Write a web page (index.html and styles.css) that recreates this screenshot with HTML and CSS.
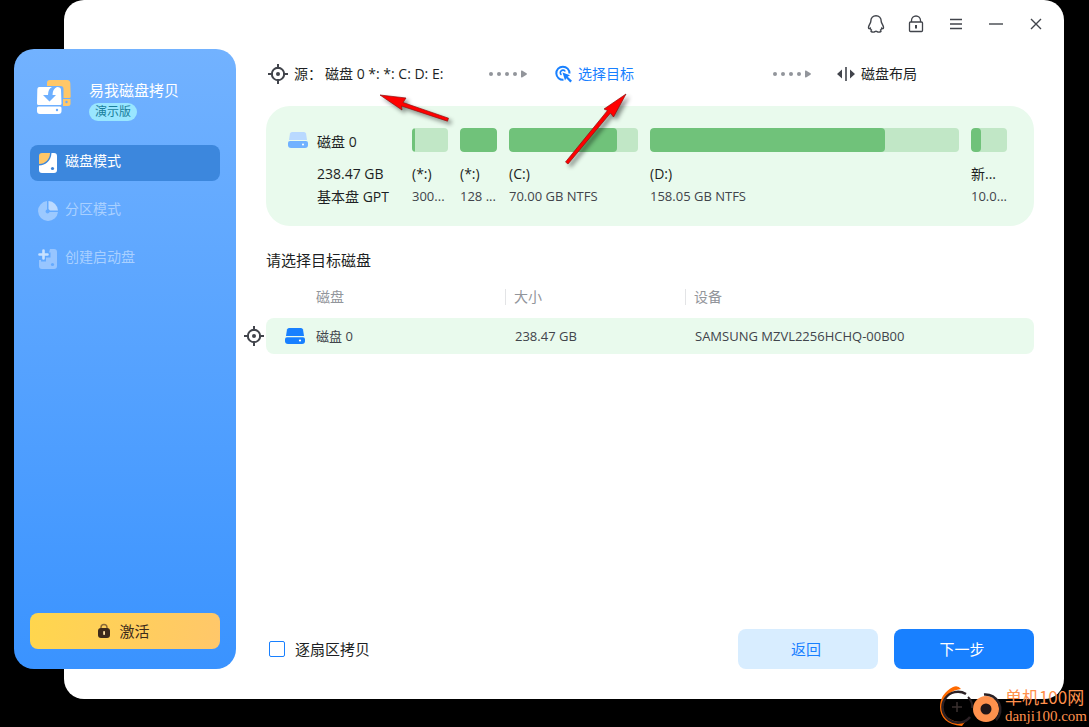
FILE: index.html
```
<!DOCTYPE html>
<html lang="zh-CN">
<head>
<meta charset="utf-8">
<title>易我磁盘拷贝</title>
<link rel="stylesheet" href="styles.css">
</head>
<body>
<svg class="defs" width="0" height="0" aria-hidden="true">
  <symbol id="crosshair" viewBox="0 0 20 20">
    <g fill="none" stroke="#41444b" stroke-width="2">
      <circle cx="10" cy="10" r="6.2"/>
      <path d="M10 0v5M10 15v5M0 10h5M15 10h5"/>
    </g>
    <circle cx="10" cy="10" r="2" fill="#41444b"/>
  </symbol>
  <symbol id="dots" viewBox="0 0 38 8">
    <g fill="#92959b">
      <circle cx="2" cy="4" r="2"/><circle cx="10" cy="4" r="2"/><circle cx="18" cy="4" r="2"/><circle cx="26" cy="4" r="2"/>
      <path d="M32 1.2q0-1 1-.6l4.5 2.7q.8.7 0 1.4L33 7.4q-1 .4-1-.6z"/>
    </g>
  </symbol>
</svg>

<div class="window">
  <aside class="sidebar">
    <div class="brand">
      <svg class="brand-icon" width="36" height="36" viewBox="0 0 36 36" aria-hidden="true">
        <path d="M11 5V4q0-3 3-3h17q3 0 3.300 3l.4 13.500q0 1.500-1.500 1.500H27.500V10q0-3-3-3H11z" fill="#ffc768"/>
        <path d="M27 20h7.500v4.500q0 2.500-2.500 2.500h-5z" fill="#ffc768"/>
        <circle cx="30.500" cy="23" r="1.200" fill="#68abff"/>
        <path d="M3.300 8H16q-4 2-4 8H7l6.500 6.500L20 16h-3.500q0-6 4.500-8 4 0 4 3l.5 13.500q0 1.500-1.500 1.500H2.500Q1 26 1 24.500L1.300 11q0-3 2-3z" fill="#fff"/>
        <path d="M1 29q0-1.500 1.500-1.500h21.500q1.500 0 1.500 1.500v3q0 3-3 3H4q-3 0-3-3z" fill="#fff"/>
        <circle cx="21" cy="31" r="1.200" fill="#68abff"/>
      </svg>
      <div class="brand-text">
        <span class="brand-name">易我磁盘拷贝</span>
        <span class="edition">演示版</span>
      </div>
    </div>
    <nav class="nav">
      <button class="nav-item active" type="button">
        <svg width="20" height="20" viewBox="0 0 20 20" aria-hidden="true">
          <path d="M13.500 0H16q3 0 3 3v14q0 3-3 3H4q-3 0-3-3v-4.500C8 12 13 8 13.500 0z" fill="#fff"/>
          <path d="M1 11V3q0-3 3-3h8C12 6 7.500 11 1 11z" fill="#ffc768"/>
          <circle cx="14.500" cy="15.500" r="1.600" fill="#3c84d9"/>
        </svg>
        <span>磁盘模式</span>
      </button>
      <button class="nav-item" type="button" disabled>
        <svg width="20" height="20" viewBox="0 0 20 20" aria-hidden="true">
          <path d="M9 0a10 10 0 1 0 11 11h-8.500a2 2 0 1 1-2.500-2.500z" fill="#9cc9ff"/>
          <path d="M10.500 0A10 10 0 0 1 20 9.500H12L10.500 8z" fill="#bcdaff"/>
        </svg>
        <span>分区模式</span>
      </button>
      <button class="nav-item" type="button" disabled>
        <svg width="20" height="20" viewBox="0 0 20 20" aria-hidden="true">
          <path d="M12 0h4q3 0 3 3v14q0 3-3 3H4q-3 0-3-3v-6h2v1.500h5V8.500h4.500v-5H11z" fill="#97c5ff"/>
          <path d="M5.500 1.500v8M1.500 5.500h8" stroke="#c8e1ff" stroke-width="2.600" stroke-linecap="round"/>
          <circle cx="14.500" cy="15.500" r="1.600" fill="#64aaff"/>
        </svg>
        <span>创建启动盘</span>
      </button>
    </nav>
    <button class="activate" type="button">
      <svg width="14" height="16" viewBox="0 0 14 16" aria-hidden="true">
        <path d="M4 6V4.500a3 3 0 0 1 6 0V6" fill="none" stroke="#8a6a38" stroke-width="1.400"/>
        <rect x="1" y="5" width="12" height="10" rx="3" fill="#3d2a1b"/>
        <rect x="6.200" y="8" width="1.800" height="4" rx=".8" fill="#ffe3a8"/>
      </svg>
      <span>激活</span>
    </button>
  </aside>

  <main class="content">
    <div class="titlebar">
      <button type="button" aria-label="QQ">
        <svg width="20" height="20" viewBox="0 0 20 20"><path d="M10 1.800c-3 0-5.200 2.200-5.200 5.400 0 2-2.300 4-2.300 6.300 0 1.200.8 1.600 1.700.6.300.9.700 1.500 1.200 2-1.200 1.400.3 2 2 2 1.200 0 1.800-.8 2.600-.8s1.400.8 2.600.8c1.700 0 3.200-.6 2-2 .5-.5.9-1.100 1.200-2 .9 1 1.700.6 1.700-.6 0-2.300-2.300-4.300-2.300-6.300 0-3.200-2.200-5.400-5.200-5.400z" fill="none" stroke="#41444b" stroke-width="1.400"/></svg>
      </button>
      <button type="button" aria-label="锁">
        <svg width="20" height="20" viewBox="0 0 20 20"><g fill="none" stroke="#41444b" stroke-width="1.300"><rect x="3.500" y="8" width="13" height="9.500" rx="1"/><path d="M5.500 8V6.500a4.500 4.500 0 0 1 9 0V8"/></g><path d="M10 11v3.500" stroke="#41444b" stroke-width="2"/></svg>
      </button>
      <button type="button" aria-label="菜单">
        <svg width="20" height="20" viewBox="0 0 20 20"><path d="M4 5.500h12M4 10h12M4 14.500h12" stroke="#41444b" stroke-width="1.400"/></svg>
      </button>
      <button type="button" aria-label="最小化">
        <svg width="20" height="20" viewBox="0 0 20 20"><path d="M3 10h14" stroke="#5a5d63" stroke-width="1.600"/></svg>
      </button>
      <button type="button" aria-label="关闭">
        <svg width="20" height="20" viewBox="0 0 20 20"><path d="M5 5l10 10M15 5L5 15" stroke="#41444b" stroke-width="1.400"/></svg>
      </button>
    </div>

    <div class="steps">
      <div class="step">
        <svg width="20" height="20" aria-hidden="true"><use href="#crosshair"/></svg>
        <div class="step-source"><span>源：</span><strong>磁盘 0 *: *: C: D: E:</strong></div>
      </div>
      <svg width="38" height="8" aria-hidden="true"><use href="#dots"/></svg>
      <div class="step current">
        <svg width="17" height="18" viewBox="0 0 17 18" aria-hidden="true">
          <path d="M14.500 8.500A6.600 6.600 0 1 0 8.500 14.800" fill="none" stroke="#1880ff" stroke-width="2"/>
          <path d="M10.200 6.500a2.600 2.600 0 1 0-3.700 3.400" fill="none" stroke="#1880ff" stroke-width="1.600"/>
          <path d="M7.500 7.500l7.500 2.700-2.300 1.500 4.300 4-1.700 1.800-4-4.300-1.300 2.300z" fill="#1880ff"/>
        </svg>
        <span>选择目标</span>
      </div>
      <svg width="38" height="8" aria-hidden="true"><use href="#dots"/></svg>
      <div class="step">
        <svg width="18" height="16" viewBox="0 0 18 16" aria-hidden="true"><path d="M5 3.500v9L0 8zM13 3.500v9L18 8z" fill="#41444b"/><path d="M9 1v14" stroke="#41444b" stroke-width="1.600"/></svg>
        <span>磁盘布局</span>
      </div>
    </div>

    <section class="source">
      <svg class="disk-icon" width="20" height="18" viewBox="0 0 20 18" aria-hidden="true">
        <path d="M4 1h12q1.500 0 2 1.500L19 9H1l1-6.500Q2.500 1 4 1z" fill="#b9d9ff"/>
        <path d="M2 10h16q2 0 2 2v2q0 3-3 3H3q-3 0-3-3v-2q0-2 2-2z" fill="#70b1ff"/><circle cx="15" cy="13.500" r="1" fill="#fff"/>
      </svg>
      <div class="disk">
        <strong class="disk-name">磁盘 0</strong>
        <span>238.47 GB</span>
        <span>基本盘 GPT</span>
      </div>
      <div class="partitions">
        <div class="partition"><div class="bar"><div class="used" style="width:8%"></div></div><strong>(*:)</strong><span>300...</span></div>
        <div class="partition"><div class="bar"><div class="used" style="width:100%"></div></div><strong>(*:)</strong><span>128 ...</span></div>
        <div class="partition"><div class="bar"><div class="used" style="width:84%"></div></div><strong>(C:)</strong><span>70.00 GB NTFS</span></div>
        <div class="partition"><div class="bar"><div class="used" style="width:76%"></div></div><strong>(D:)</strong><span>158.05 GB NTFS</span></div>
        <div class="partition"><div class="bar"><div class="used" style="width:28%"></div></div><strong class="named">新...</strong><span>10.0...</span></div>
      </div>
    </section>

    <h2 class="heading">请选择目标磁盘</h2>
    <table class="targets">
      <colgroup><col class="c-mark"><col class="c-disk"><col class="c-size"><col></colgroup>
      <thead>
        <tr><td></td><th scope="col">磁盘</th><th scope="col"><span>大小</span></th><th scope="col"><span>设备</span></th></tr>
      </thead>
      <tbody>
        <tr>
          <td><svg width="20" height="20" aria-hidden="true"><use href="#crosshair"/></svg></td>
          <td>
            <div class="target-name">
              <svg width="20" height="18" viewBox="0 0 20 18" aria-hidden="true">
                <path d="M4 1h12q1.500 0 2 1.500L19 9H1l1-6.500Q2.500 1 4 1z" fill="#1880ff"/>
                <path d="M2 10.300h16q2 0 2 2V14q0 3-3 3H3q-3 0-3-3v-1.700q0-2 2-2z" fill="#1880ff"/><circle cx="15" cy="13.500" r="1.100" fill="#fff"/>
              </svg>
              <strong>磁盘 0</strong>
            </div>
          </td>
          <td>238.47 GB</td>
          <td>SAMSUNG MZVL2256HCHQ-00B00</td>
        </tr>
      </tbody>
    </table>

    <div class="footer">
      <label class="check"><input type="checkbox"><span>逐扇区拷贝</span></label>
      <button class="btn back" type="button">返回</button>
      <button class="btn next" type="button">下一步</button>
    </div>
  </main>

  <svg class="arrow arrow-source" width="84" height="40" viewBox="0 0 84 40" aria-hidden="true">
    <path d="M4 4l26 3-3 4.500 45.500 15.700-1 3L25.500 15 26 19z" fill="#f00" stroke="#8c0f0f" stroke-width=".7"/>
  </svg>
  <svg class="arrow arrow-target" width="78" height="84" viewBox="0 0 78 84" aria-hidden="true">
    <path d="M64 4L51.500 27l-3-4L6 74l-2.500-2L45.500 20.500 42 19z" fill="#f00" stroke="#8c0f0f" stroke-width=".7"/>
  </svg>
</div>

<div class="watermark">
  <svg width="64" height="44" viewBox="0 0 64 44" aria-hidden="true">
    <path d="M22 4Q19 0 14 2 1 9 1 22c0 10 7 18 22 19l3-4C12 38 4 31 4 22 4 12 12 5 22 4z" fill="#ff6a00"/>
    <path d="M27 9A15.500 15.500 0 1 0 31 32" fill="none" stroke="#2b2024" stroke-width="2.500"/>
    <path d="M29 12q5 5 4 11" fill="none" stroke="#2b2024" stroke-width="2"/>
    <path d="M18 17v10M13 22h10" stroke="#3a302f" stroke-width="1.500"/>
    <circle cx="47" cy="24" r="13" fill="#ff914d"/>
    <path d="M45 9.500A15 15 0 0 1 57 35" fill="none" stroke="#2b2024" stroke-width="2.500"/>
    <circle cx="47" cy="24" r="5.500" fill="#211618"/>
  </svg>
  <div class="watermark-text"><span class="site">单机100网</span><span class="domain">danji100.com</span></div>
</div>
</body>
</html>
```
FILE: styles.css
```
* { box-sizing: border-box; }

body {
  margin: 0;
  background: #000;
  color: #1d1f23;
  font: 14px/22px "Open Sans", "Noto Sans CJK SC", sans-serif;
}

button { border: 0; padding: 0; background: none; color: inherit; font: inherit; }
svg { display: block; flex: none; }
strong { font-weight: 400; }
.defs { position: absolute; }

.window {
  position: relative;
  display: flex;
  min-height: calc(100vh - 28px);
  margin: 0 25px 28px 64px;
  border-radius: 20px;
  background: #fff;
}

.sidebar {
  display: flex;
  flex-direction: column;
  flex: none;
  width: 222px;
  margin: 49px 0 30px -50px;
  padding: 30px 16px 20px;
  border-radius: 20px;
  background: linear-gradient(#72b2ff, #3a93ff);
  color: #fff;
}

.brand { display: flex; gap: 17px; padding-left: 6px; }
.brand-text { display: flex; flex-direction: column; align-items: flex-start; gap: 2px; }
.brand-name { font-size: 15px; line-height: 22px; }
.edition {
  padding: 0 6px;
  border-radius: 9px;
  background: #99e6ff;
  color: #1a7f9c;
  font-size: 12px;
  line-height: 18px;
}

.nav { display: flex; flex-direction: column; gap: 12px; margin-top: 24px; }
.nav-item {
  display: flex;
  align-items: center;
  gap: 7px;
  height: 36px;
  padding: 0 8px;
  border-radius: 8px;
  color: #a9d0ff;
}
.nav-item span { padding-bottom: 4px; }
.nav-item.active { background: #3c87dd; color: #fff; }

.activate {
  display: flex;
  align-items: center;
  justify-content: center;
  gap: 8px;
  height: 36px;
  margin-top: auto;
  padding-right: 3px;
  border-radius: 8px;
  background: linear-gradient(100deg, #ffd64d, #ffc76a);
  color: #3d2a1b;
  font-size: 15px;
}

.content {
  display: flex;
  flex: 1;
  flex-direction: column;
  min-width: 0;
  padding: 4px 30px 30px;
}

.titlebar { display: flex; justify-content: flex-end; margin-right: -22px; }
.titlebar button { display: grid; place-items: center; width: 40px; height: 40px; }

.steps {
  display: grid;
  grid-template-columns: 221fr 66px 218fr 64px 197fr;
  align-items: center;
  height: 24px;
  margin-top: 18px;
  padding-left: 2px;
}
.step { display: flex; align-items: center; gap: 6px; line-height: 24px; white-space: nowrap; }
.step-source { display: flex; gap: 3px; }
.current { color: #1880ff; }

.source {
  display: flex;
  margin-top: 20px;
  padding: 22px 27px 18px 22px;
  border-radius: 24px;
  background: #e9faed;
}
.disk-icon { margin-top: 3px; }
.disk { display: flex; flex-direction: column; width: 95px; margin-left: 9px; line-height: 23px; }
.disk-name { margin: 2px 0 9px; }
.partitions {
  display: grid;
  flex: 1;
  grid-template-columns: 36px 37px 129fr 309fr 36px;
  gap: 12px;
}
.partition { display: flex; flex-direction: column; min-width: 0; font-size: 13px; line-height: 23px; white-space: nowrap; }
.partition strong { font-size: 14px; font-weight: 500; }
.partition .named { font-weight: 400; }
.partition span { color: #41444b; }
.bar { height: 24px; margin-bottom: 10px; border-radius: 4px; overflow: hidden; background: #c1e7c6; }
.used { height: 100%; border-radius: 4px; background: #70c27a; }

.heading { margin: 23px 0 0; font-size: 15px; font-weight: 400; line-height: 22px; }

.targets {
  width: calc(100% + 22px);
  margin: 10px 0 0 -22px;
  border-collapse: collapse;
  table-layout: fixed;
  text-align: left;
}
.c-mark { width: 22px; }
.c-disk { width: 239px; }
.c-size { width: 180px; }
.targets th, .targets td { padding: 0; }
.targets th { height: 37px; padding-bottom: 6px; color: #92959b; font-weight: 400; line-height: 16px; }
.targets th:nth-child(2) { padding-left: 50px; }
.targets th span { display: block; padding-left: 8px; border-left: 1px solid #e3e4e6; }
.targets tbody td { height: 36px; color: #41444b; font-size: 13px; }
.targets tbody td:nth-child(n + 2) { background: #e9faed; }
.targets tbody td:nth-child(n + 3) { padding-left: 10px; }
.targets tbody td:nth-child(2) { padding-left: 19px; border-radius: 8px 0 0 8px; }
.targets tbody td:last-child { border-radius: 0 8px 8px 0; }
.target-name { display: flex; align-items: center; gap: 11px; }

.footer { display: flex; align-items: center; gap: 16px; margin-top: auto; }
.check { display: flex; align-items: center; gap: 10px; margin-right: auto; padding-left: 3px; font-size: 15px; }
.check input {
  width: 16px;
  height: 16px;
  margin: 0;
  border: 1px solid #1880ff;
  border-radius: 2px;
  background: #fff;
  appearance: none;
}
.btn { width: 140px; height: 40px; padding-right: 4px; border-radius: 8px; font-size: 15px; }
.back { background: #d8edff; color: #1880ff; }
.next { background: #1880ff; color: #fff; }

.arrow { position: absolute; filter: drop-shadow(3px 3px 2px rgba(0, 0, 0, .45)); }
.arrow-source { top: 91px; left: 312px; }
.arrow-target { top: 90px; left: 498px; }

.watermark {
  position: absolute;
  top: 685px;
  right: 2px;
  display: flex;
  gap: 2px;
  height: 42px;
  overflow: hidden;
  color: #ff914d;
  white-space: nowrap;
}
.watermark-text { display: flex; flex-direction: column; }
.site { font: 17px/24px "Noto Sans CJK SC", sans-serif; }
.domain { font: 15px/14px "Liberation Serif", serif; }
```
